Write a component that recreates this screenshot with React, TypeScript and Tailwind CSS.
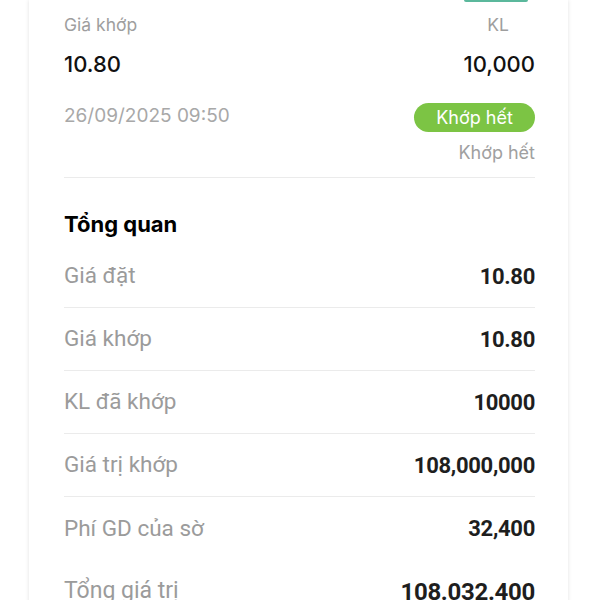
import React from 'react';

const rows = [
  { label: 'Giá đặt', value: '10.80' },
  { label: 'Giá khớp', value: '10.80' },
  { label: 'KL đã khớp', value: '10000' },
  { label: 'Giá trị khớp', value: '108,000,000' },
  { label: 'Phí GD của sờ', value: '32,400' },
];

export default function App() {
  return (
    <div className="min-h-[600px] bg-white overflow-hidden">
      <div className="ml-[29px] w-[539px] bg-white shadow-[0_0_4px_rgba(0,0,0,0.12)] pl-[35px] pr-[33px] pb-10">
        {/* Bottom edge of the button above */}
        <div className="flex justify-end">
          <div className="h-[2px] w-[64px] mr-[7px] bg-[#5bb89c] rounded-b" />
        </div>

        {/* Match info */}
        <div className="font-['Inter',sans-serif]">
          <div className="mt-[13px] flex justify-between text-[17.5px] leading-[20px] text-[#9e9e9e]">
            <span>Giá khớp</span>
            <span className="mr-[26px]">KL</span>
          </div>
          <div className="mt-[15px] flex justify-between text-[22px] leading-[28px] font-medium text-[#111]">
            <span>10.80</span>
            <span>10,000</span>
          </div>
          <div className="mt-[25px] flex items-center justify-between">
            <span className="text-[19px] leading-[24px] text-[#a8a8a8] -mt-[4px]">26/09/2025 09:50</span>
            <span className="h-[29px] w-[121px] rounded-full bg-[#7cc444] text-white text-[18px] flex items-center justify-center">
              Khớp hết
            </span>
          </div>
          <div className="mt-[10px] flex justify-end text-[18px] leading-[22px] text-[#a0a0a0]">
            Khớp hết
          </div>
        </div>

        <div className="mt-[13px] h-px bg-[#ebebeb]" />

        {/* Overview */}
        <div className="mt-[32px] font-['Inter',sans-serif] text-[22px] leading-[28px] font-bold text-black">
          Tổng quan
        </div>

        <div className="mt-[7px] font-['Roboto',sans-serif]">
          {rows.map((r, i) => (
            <div
              key={r.label}
              className={`h-[63px] flex items-center justify-between ${i < 4 ? 'border-b border-[#ebebeb]' : ''}`}
            >
              <span className="text-[22.5px] text-[#9b9b9b]">{r.label}</span>
              <span className="text-[22px] font-bold text-[#1e1e1e] tracking-[-0.3px]">{r.value}</span>
            </div>
          ))}
          <div className="h-[63px] flex items-center justify-between">
            <span className="text-[23px] text-[#9b9b9b]">Tổng giá trị</span>
            <span className="text-[24px] font-bold text-[#1e1e1e] tracking-[-0.3px]">108.032.400</span>
          </div>
        </div>
      </div>
    </div>
  );
}
